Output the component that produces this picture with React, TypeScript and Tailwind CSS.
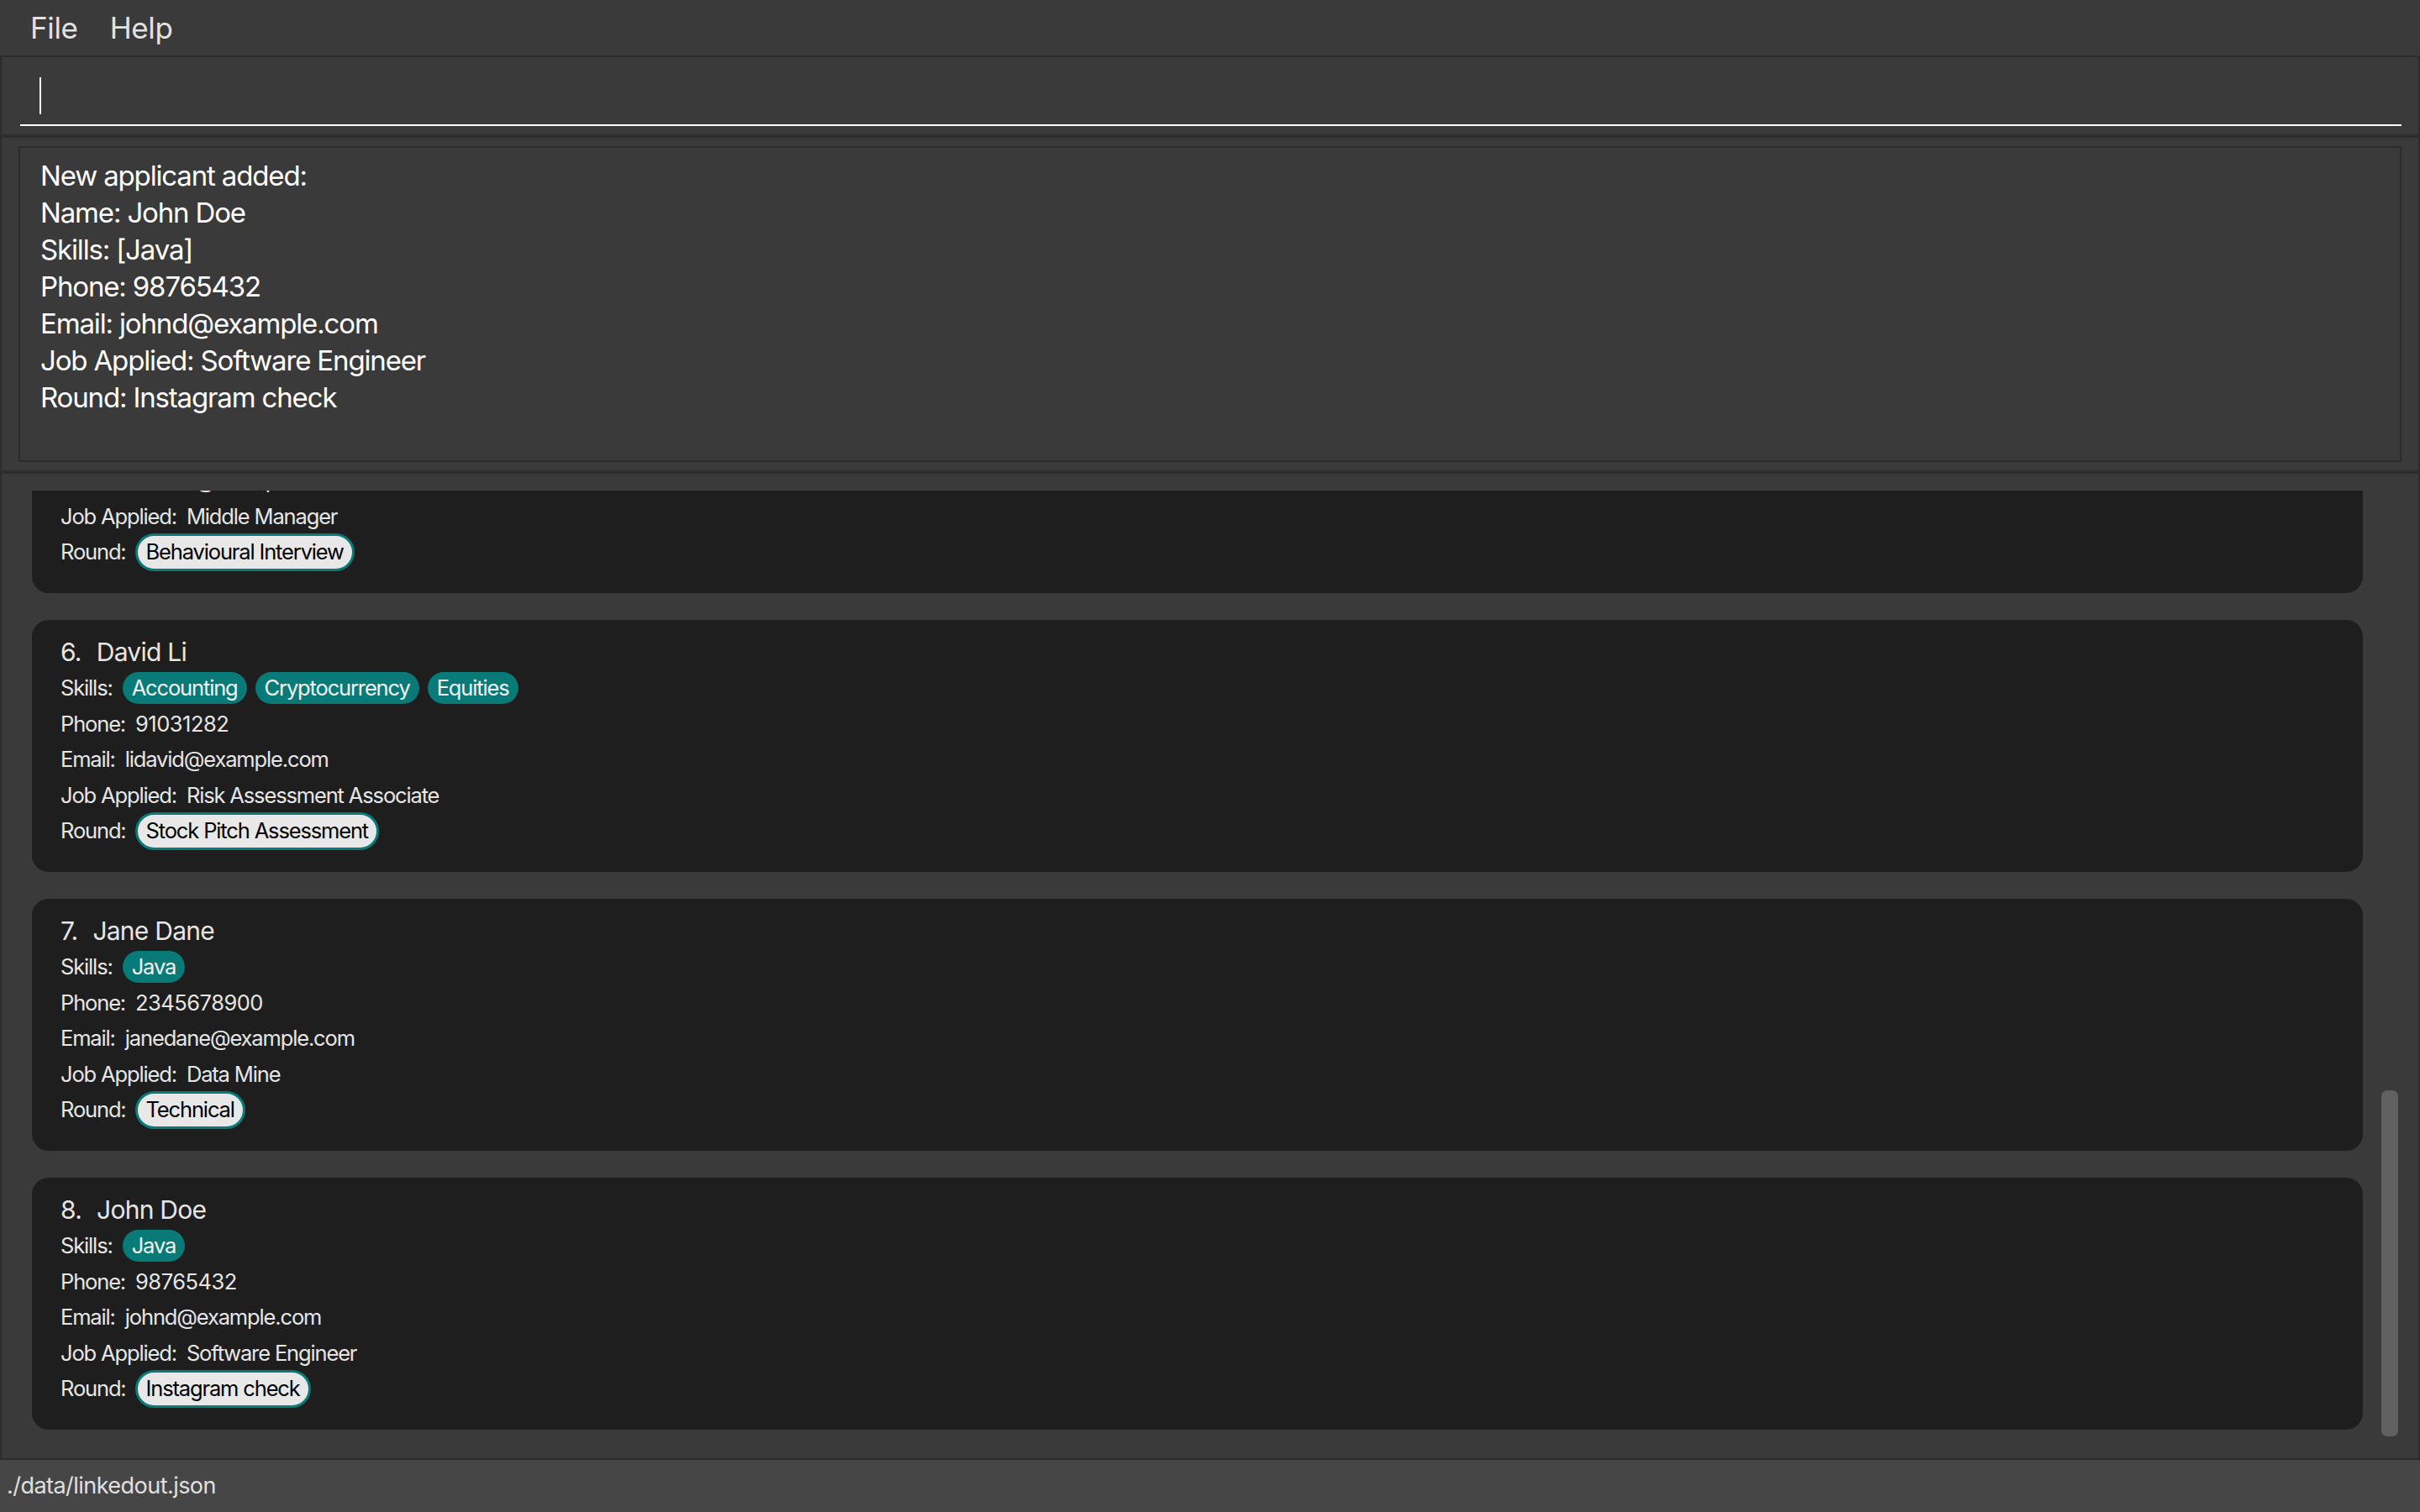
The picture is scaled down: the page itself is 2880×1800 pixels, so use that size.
import React from "react";

type Applicant = {
  idx: number;
  name: string;
  skills: string[];
  phone: string;
  email: string;
  job: string;
  round: string;
  partial?: boolean;
};

const applicants: Applicant[] = [
  {
    idx: 5,
    name: "Bernice Yu",
    skills: ["Management"],
    phone: "99272758",
    email: "bernice@example.com",
    job: "Middle Manager",
    round: "Behavioural Interview",
    partial: true,
  },
  {
    idx: 6,
    name: "David Li",
    skills: ["Accounting", "Cryptocurrency", "Equities"],
    phone: "91031282",
    email: "lidavid@example.com",
    job: "Risk Assessment Associate",
    round: "Stock Pitch Assessment",
  },
  {
    idx: 7,
    name: "Jane Dane",
    skills: ["Java"],
    phone: "2345678900",
    email: "janedane@example.com",
    job: "Data Mine",
    round: "Technical",
  },
  {
    idx: 8,
    name: "John Doe",
    skills: ["Java"],
    phone: "98765432",
    email: "johnd@example.com",
    job: "Software Engineer",
    round: "Instagram check",
  },
];

function Row({
  label,
  value,
  valueClass = "",
}: {
  label: string;
  value: string;
  valueClass?: string;
}) {
  return (
    <div className="h-[42.5px] flex items-center whitespace-nowrap">
      <span>{label}</span>
      <span className={"ml-[12px] " + valueClass}>{value}</span>
    </div>
  );
}

function Card({ a }: { a: Applicant }) {
  return (
    <div className="shrink-0 h-[300px] rounded-[20px] bg-[#1e1e1e] pt-[17.5px] pl-[34px] flex flex-col text-[25.5px] tracking-[-0.045em] text-[#e6e6e6]">
      {a.partial ? (
        <div className="h-[127.5px]" />
      ) : (
        <>
          <div className="h-[42.5px] flex items-center text-[30px] tracking-[-0.025em] whitespace-nowrap">
            <span>{a.idx}.</span>
            <span className="ml-[18px]">{a.name}</span>
          </div>
          <div className="h-[42.5px] flex items-center whitespace-nowrap">
            <span>Skills:</span>
            <div className="ml-[12px] flex gap-[10px]">
              {a.skills.map((s) => (
                <span
                  key={s}
                  className="h-[38px] px-[11px] rounded-full bg-[#087b78] flex items-center text-[#f2f2f2]"
                >
                  {s}
                </span>
              ))}
            </div>
          </div>
          <Row label="Phone:" value={a.phone} valueClass="tracking-[-0.02em]" />
        </>
      )}
      <Row label="Email:" value={a.email} />
      <Row label="Job Applied:" value={a.job} />
      <div className="h-[42.5px] flex items-center whitespace-nowrap">
        <span>Round:</span>
        <span className="ml-[11px] h-[45px] px-[10px] rounded-full bg-[#e8e8e8] border-[3px] border-[#087b78] text-black flex items-center">
          {a.round}
        </span>
      </div>
    </div>
  );
}

export default function App() {
  return (
    <div className="w-[2880px] h-[1800px] bg-[#2c2c2c] flex flex-col overflow-hidden [font-family:Inter,sans-serif]">
      {/* Menu bar */}
      <div className="h-[66px] shrink-0 bg-[#3a3a3a] flex items-center text-[35px] text-[#e2e2e2] tracking-[-0.01em]">
        <span className="ml-[36px]">File</span>
        <span className="ml-[38px]">Help</span>
      </div>

      {/* Command box */}
      <div className="mt-[2px] mx-[2px] h-[92px] shrink-0 bg-[#3a3a3a] flex flex-col pl-[22px] pr-[20px]">
        <div className="h-[80px] flex items-start pt-[24px] pl-[23px]">
          <div className="w-[2px] h-[44px] bg-white" />
        </div>
        <div className="h-[2px] bg-white" />
      </div>

      {/* Result display */}
      <div className="mt-[4px] mx-[2px] h-[396px] shrink-0 bg-[#3a3a3a] px-[20px] py-[10px] flex">
        <div className="flex-1 border-2 border-[#2c2c2c] pl-[24px] pt-[11px] text-[33px] leading-[44px] text-white tracking-[-0.035em]">
          <div>New applicant added:</div>
          <div>Name: John Doe</div>
          <div>Skills: [Java]</div>
          <div>Phone: 98765432</div>
          <div>Email: johnd@example.com</div>
          <div>Job Applied: Software Engineer</div>
          <div>Round: Instagram check</div>
        </div>
      </div>

      {/* List panel */}
      <div className="mt-[4px] mx-[2px] flex-1 min-h-0 bg-[#3a3a3a] pt-[20px] pb-[20px] flex">
        <div className="ml-[36px] w-[2774px] h-full overflow-hidden flex flex-col justify-end gap-[32px] pb-[14px]">
          {applicants.map((a) => (
            <Card key={a.idx} a={a} />
          ))}
        </div>
        <div className="ml-[22px] w-[20px] h-full flex flex-col justify-end pb-[6px]">
          <div className="h-[412px] w-[20px] rounded-[7px] bg-[#616161]" />
        </div>
      </div>

      {/* Status bar */}
      <div className="mt-[2px] h-[62px] shrink-0 bg-[#464646] flex items-center pl-[8px] text-[27px] text-[#e0e0e0] tracking-[-0.02em]">
        ./data/linkedout.json
      </div>
    </div>
  );
}
